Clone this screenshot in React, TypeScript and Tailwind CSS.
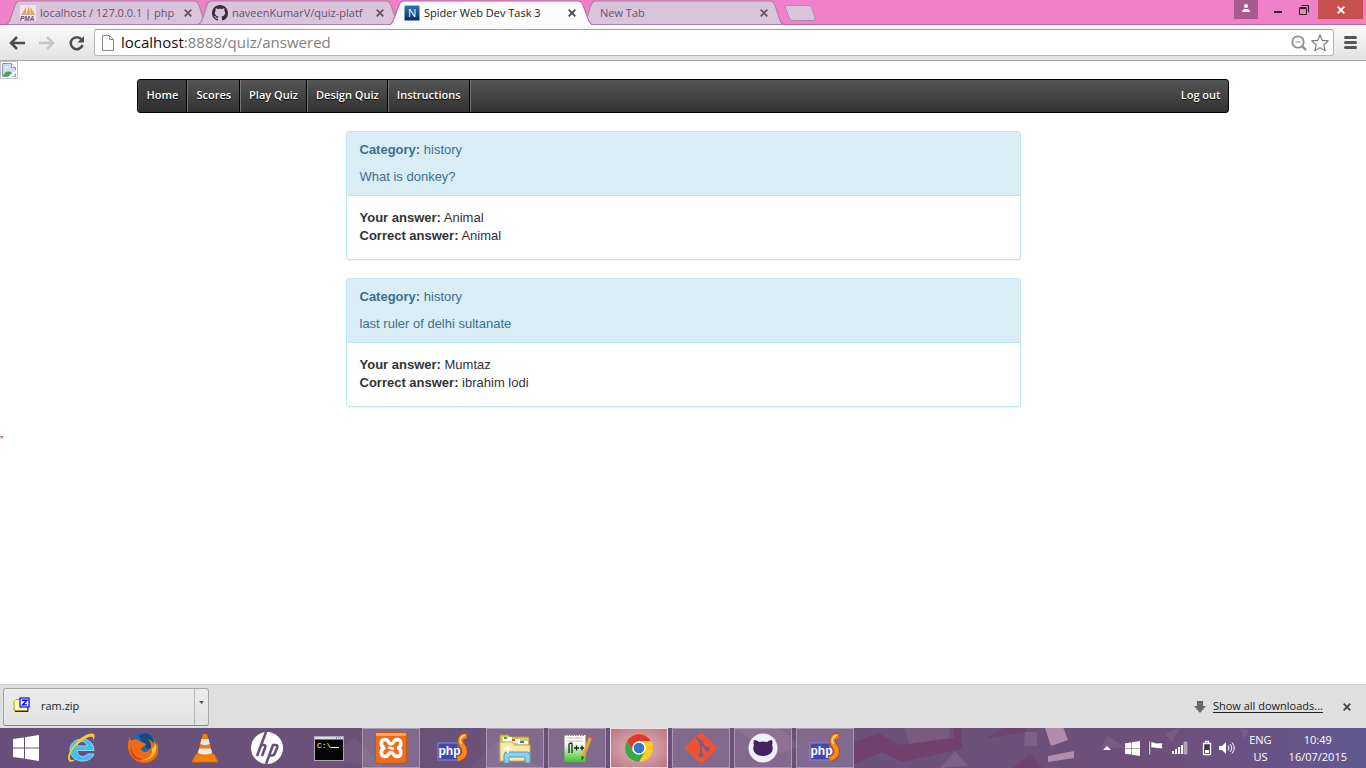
import React from "react";

const uiFont = "font-['Open_Sans','Noto_Sans',sans-serif]";

function Cross({ className = "" }: { className?: string }) {
  return (
    <svg viewBox="0 0 8 8" className={"size-2 " + className} stroke="currentColor" strokeWidth="1.8" fill="none" aria-hidden="true">
      <path d="M0.7 0.7 7.3 7.3M7.3 0.7 0.7 7.3" />
    </svg>
  );
}

function Tab({ title, icon, active = false }: { title: string; icon?: React.ReactNode; active?: boolean }) {
  return (
    <div className={"relative -mr-[14px] flex h-[25px] w-[206px] shrink-0 items-center pt-px pl-4 " + (active ? "z-10 text-[#222]" : "text-[#6b4f66]")}>
      <svg className="absolute inset-0 h-full w-full" viewBox="0 0 204 25" preserveAspectRatio="none" aria-hidden="true">
        <path
          d={active ? "M0 25.5C3 25 4 23 5 21L11 5C12 2 13 1 16 1H188C191 1 192 2 193 5L199 21C200 23 201 25 204 25.5" : "M2 24.5C4 24 5 22 6 20L11 5C12 2 13 1 16 1H188C191 1 192 2 193 5L198 20C199 23 200 24 202 24.5Z"}
          fill={active ? "#fbfbfb" : "#d9c5db"}
          stroke={active ? "#b56a9e" : "#a183a1"}
        />
      </svg>
      {icon && <span className="relative mr-1 size-4 shrink-0">{icon}</span>}
      <span className={"relative h-[18px] w-[136px] text-[11px] leading-[18px] whitespace-nowrap " + (icon ? "" : "mr-4 ml-1")}>{title}</span>
      <button type="button" aria-label="Close tab" className={"relative ml-1 p-1 " + (active ? "text-[#4a4a4a]" : "text-[#6b4f66]")}>
        <Cross />
      </button>
    </div>
  );
}

const pmaIcon = (
  <svg viewBox="0 0 16 16">
    <rect width="16" height="16" fill="#f3e4ee" />
    <path d="M2 9 6 2v7zM6.5 9 9 1l1 8zM10.500 9V2l4 7z" fill="#f89c36" />
    <path d="M1 9.500H15" stroke="#caa" />
    <text x="0" y="15.500" fontSize="6.500" fontWeight="700" fontStyle="italic" fontFamily="Liberation Sans, sans-serif" fill="#5b5080">PMA</text>
  </svg>
);

const githubPath =
  "M8 0C3.580 0 0 3.580 0 8c0 3.540 2.290 6.530 5.470 7.590.4.070.55-.17.55-.38 0-.19-.01-.82-.01-1.490-2.010.37-2.530-.49-2.690-.94-.09-.23-.48-.94-.82-1.130-.28-.15-.68-.52-.01-.53.63-.01 1.080.58 1.230.82.72 1.210 1.870.87 2.330.66.070-.52.28-.87.51-1.070-1.780-.2-3.640-.89-3.640-3.950 0-.87.31-1.590.82-2.150-.08-.2-.36-1.020.08-2.120 0 0 .67-.21 2.200.82.64-.18 1.320-.27 2-.27s1.360.09 2 .27c1.530-1.040 2.200-.82 2.200-.82.44 1.100.16 1.920.08 2.120.51.56.82 1.270.82 2.150 0 3.070-1.870 3.750-3.650 3.950.29.25.54.73.54 1.480 0 1.070-.01 1.930-.01 2.200 0 .21.15.46.55.38A8.010 8.010 0 0 0 16 8c0-4.420-3.580-8-8-8z";

const githubIcon = (
  <svg viewBox="0 0 16 16">
    <path d={githubPath} fill="#3d2b3d" />
  </svg>
);

const netIcon = (
  <svg viewBox="0 0 16 16">
    <defs>
      <linearGradient id="net" x2="0" y2="1">
        <stop stopColor="#2f79b4" />
        <stop offset="1" stopColor="#0b2c62" />
      </linearGradient>
    </defs>
    <rect x="0.5" y="0.5" width="15" height="15" fill="url(#net)" />
    <text x="4" y="12" fontSize="11" fontFamily="Open Sans, sans-serif" fill="#fff">N</text>
  </svg>
);

function TabStrip() {
  return (
    <header className="flex h-[25px] items-start bg-[#f080c8] pl-1 shadow-[inset_0_-1px_0_#b56a9e]">
      <Tab title="localhost / 127.0.0.1 | php" icon={pmaIcon} />
      <Tab title="naveenKumarV/quiz-platf" icon={githubIcon} />
      <Tab title="Spider Web Dev Task 3" icon={netIcon} active />
      <Tab title="New Tab" />
      <button type="button" aria-label="New tab" className="mt-[5px] ml-3">
        <svg viewBox="0 0 32 16" className="h-4 w-8">
          <path d="M3 0.5H24c2 0 3 1 4 3l3 9c.5 2 0 3-2 3H9c-2 0-3-1-4-3L1.500 3C1 1 1.500.5 3 .5z" fill="#d9c5db" stroke="#b184ae" />
        </svg>
      </button>
      <div className="ml-auto flex h-[19px] items-stretch">
        <button type="button" aria-label="Profile" className="mr-2 flex w-6 items-center justify-center bg-[#a9598f]">
          <svg viewBox="0 0 8 8" className="mb-1 size-2" fill="#fff">
            <circle cx="4" cy="2" r="2" />
            <path d="M0 8C0 5.500 2 5 4 5s4 .5 4 3z" />
          </svg>
        </button>
        <button type="button" aria-label="Minimize" className="flex w-6 items-center justify-center">
          <span className="mt-1 h-[2px] w-2 bg-[#222]" />
        </button>
        <button type="button" aria-label="Restore" className="flex w-7 items-center justify-center">
          <svg viewBox="0 0 10 10" className="size-[10px]" fill="none" stroke="#222">
            <path d="M.5 3.500h7v6h-7zM.5 2.500h7M2.500 .5h7v7" />
          </svg>
        </button>
        <button type="button" aria-label="Close window" className="mr-[3px] flex w-[45px] items-center justify-center bg-[#c75050] text-white">
          <Cross />
        </button>
      </div>
    </header>
  );
}

function Toolbar() {
  return (
    <div className="flex h-9 items-center border-b border-[#a8a8a8] bg-linear-to-b from-[#fbfbfb] to-[#e2e2e2] pr-2 pl-2">
      <button type="button" aria-label="Back" className="mr-3 p-px">
        <svg viewBox="0 0 16 14" className="h-[14px] w-4" fill="none" stroke="#4d4d4d" strokeWidth="2.500">
          <path d="M2 7h14M8 1 2 7l6 6" />
        </svg>
      </button>
      <button type="button" aria-label="Forward" className="mr-3 p-px">
        <svg viewBox="0 0 16 14" className="h-[14px] w-4" fill="none" stroke="#c6c6c6" strokeWidth="2.500">
          <path d="M0 7h14M8 1l6 6-6 6" />
        </svg>
      </button>
      <button type="button" aria-label="Reload" className="mr-2 p-px">
        <svg viewBox="0 0 16 16" className="size-4">
          <path d="M12.500 4.500A6 6 0 1 0 13.500 10" fill="none" stroke="#4d4d4d" strokeWidth="2.500" />
          <path d="M15 1v6.500H8.500z" fill="#4d4d4d" />
        </svg>
      </button>
      <div className="flex h-[27px] flex-1 items-center rounded-[3px] border border-[#b5b5b5] border-t-[#9d9d9d] bg-white px-1">
        <svg viewBox="0 0 14 16" className="mx-[2px] h-4 w-[14px]" fill="#fafafa" stroke="#8b8b8b">
          <path d="M1.500.5h7l4 4v11h-11zM8.500.5v4h4" />
        </svg>
        <label className={"relative ml-1 h-[25px] flex-1 text-[15px] leading-[25px] " + uiFont}>
          <input aria-label="Address" defaultValue="localhost:8888/quiz/answered" className="h-full w-full bg-transparent text-transparent outline-none" />
          <span className="pointer-events-none absolute inset-0 text-[#808080]">
            <span className="text-[#111]">localhost</span>:8888/quiz/answered
          </span>
        </label>
        <button type="button" aria-label="Zoom" className="mr-1">
          <svg viewBox="0 0 16 16" className="size-4" fill="none" stroke="#8f8f8f">
            <circle cx="7" cy="7" r="5.700" strokeWidth="1.800" />
            <path d="M4.500 7h5" />
            <path d="M11 11l4 4" strokeWidth="2.400" />
          </svg>
        </button>
        <button type="button" aria-label="Bookmark">
          <svg viewBox="0 0 18 18" className="size-[18px]" fill="#fff" stroke="#777" strokeWidth="1.100">
            <path d="M9 .8 11.300 6.400 17.300 6.900 12.700 10.800 14.200 16.800 9 13.600 3.800 16.800 5.300 10.800.7 6.900 6.700 6.400z" strokeLinejoin="round" />
          </svg>
        </button>
      </div>
      <button type="button" aria-label="Menu" className="ml-[9px] p-px">
        <svg viewBox="0 0 13 13" className="size-[13px]" stroke="#555" strokeWidth="3" strokeLinecap="round">
          <path d="M1.500 1.500h10M1.500 6.500h10M1.500 11.500h10" />
        </svg>
      </button>
    </div>
  );
}

const links = ["Home", "Scores", "Play Quiz", "Design Quiz", "Instructions"];

function SiteNav() {
  return (
    <nav className={"mx-auto flex h-[34px] w-4/5 items-stretch overflow-hidden rounded-[3px] border border-black bg-linear-to-b from-[#555] to-[#333] text-[11px] leading-[30px] font-semibold text-white [text-shadow:0_1px_1px_#000] " + uiFont}>
      {links.map((label, i) => (
        <a key={label} href="#" className={"border-r border-r-black px-2 " + (i === 0 ? "border-l border-l-[#444] bg-linear-to-b from-[#444] to-[#303030]" : "border-l border-l-[#777]")}>
          {label}
        </a>
      ))}
      <span className="w-px bg-[#777]" />
      <a href="#" className="ml-auto px-2">Log out</a>
    </nav>
  );
}

function AnswerCard({ category, question, given, correct }: { category: string; question: string; given: string; correct: string }) {
  return (
    <article className="overflow-hidden rounded-[3px] border border-[#bce8f1] bg-white shadow-[0_1px_1px_rgba(0,0,0,0.05)]">
      <div className="border-b border-[#bce8f1] bg-[#d9edf7] px-[13px] py-[9px] text-[#3f6d8c]">
        <p className="mb-[9px]"><b>Category:</b> {category}</p>
        <p>{question}</p>
      </div>
      <div className="px-[13px] pt-[13px] pb-[14px] text-[#333]">
        <p><b>Your answer:</b> {given}</p>
        <p><b>Correct answer:</b> {correct}</p>
      </div>
    </article>
  );
}

function QuizPage() {
  return (
    <main className="flex-1 bg-white font-['Liberation_Sans',Arial,sans-serif] text-[13px] leading-[18px]">
      <svg viewBox="0 0 18 18" className="size-[18px]" role="img" aria-label="Missing image">
        <path d="M.5.5h17v17H.5z" fill="#fff" stroke="#c0c0c0" />
        <path d="M2.500 2.500h9l4 4v9h-13z" fill="#c8dcf4" stroke="#8a98a8" />
        <path d="M11.500 2.500v4h4" fill="#fff" stroke="#8a98a8" />
        <path d="M5 7q2-3 4 0z" fill="#fff" />
        <path d="M3 15q3-7 9-3l-3 3z" fill="#4ba63c" />
        <path d="M8 16l8-7v3l-4 4z" fill="#fff" />
      </svg>
      <SiteNav />
      <section className="mx-auto mt-[18px] flex w-full max-w-[675px] flex-col gap-[18px]">
        <AnswerCard category="history" question="What is donkey?" given="Animal" correct="Animal" />
        <AnswerCard category="history" question="last ruler of delhi sultanate" given="Mumtaz" correct="ibrahim lodi" />
      </section>
      <p className="mt-[18px] text-[10px] text-[#555]">„</p>
    </main>
  );
}

function DownloadBar() {
  return (
    <div className={"flex h-11 items-center border-t border-[#d0d0d0] bg-[#dfdfdf] text-[11px] text-[#222] " + uiFont}>
      <div className="ml-[3px] flex h-[38px] w-[206px] items-stretch rounded-[3px] border border-[#a5a5a5] border-b-[#888] bg-linear-to-b from-[#ececec] to-[#e2e2e2]">
        <button type="button" className="flex flex-1 items-center gap-[11px] pl-[9px] text-left">
          <svg viewBox="0 0 17 16" className="mb-1 h-4 w-[17px]">
            <path d="M1 4.500 3 2.500h5l1 2h5.500v9H1z" fill="#ffffb0" stroke="#b0a020" />
            <path d="M2 14.500h13v-9" fill="none" stroke="#222" />
            <rect x="7" y="1" width="9" height="9" fill="#fff" stroke="#00f" strokeWidth="1.200" />
            <path d="M9 3.200h5L9.500 7.900H14" fill="none" stroke="#00f" strokeWidth="1.400" />
          </svg>
          <span>ram.zip</span>
        </button>
        <button type="button" aria-label="Download options" className="flex w-[14px] justify-center border-l border-[#b5b5b5] pt-3">
          <svg viewBox="0 0 5 3" className="h-[3px] w-[5px]"><path d="M0 0h5L2.500 3z" fill="#555" /></svg>
        </button>
      </div>
      <svg viewBox="0 0 12 12" className="mr-[7px] ml-auto size-3" fill="#686868"><path d="M3 0h6v5h3l-6 7-6-7h3z" /></svg>
      <a href="#" className="underline underline-offset-2">Show all downloads...</a>
      <button type="button" aria-label="Close downloads" className="mr-[11px] ml-4 p-1 text-[#444]"><Cross /></button>
    </div>
  );
}

const xamppIcon = (
  <svg viewBox="0 0 32 32">
    <rect x=".5" y=".5" width="31" height="31" rx="3" fill="#ee6c19" stroke="#c7560e" />
    <path d="M1 1h30v3H1z" fill="#f6a66c" />
    <path d="M10 7.500C5.500 7.500 5 13.500 9 16 5 18 5.500 24.500 10 24.500c4 0 3-4 6-4s2 4 6 4c4.500 0 5-6 1.500-8.500C27 13.500 26.500 7.500 22 7.500c-4 0-3 4.500-6 4.500s-2-4.500-6-4.500z" fill="none" stroke="#fff" strokeWidth="3.600" strokeLinejoin="round" />
    <path d="M13 15.500 19 17" stroke="#fff" strokeWidth="2.500" />
  </svg>
);

const phpIcon = (
  <svg viewBox="0 0 32 32">
    <rect x="1" y="11" width="20" height="17" fill="#4048b0" stroke="#7f8be0" />
    <text x="1.500" y="23" fontSize="12" fontWeight="700" fontFamily="Liberation Sans, sans-serif" fill="#fff">php</text>
    <g fill="none" strokeLinecap="butt">
      <path d="M30 4C23 4 22 9 25 13c4 5 4 12-5 14" stroke="#b94a0c" strokeWidth="6.500" />
      <path d="M29.500 4C23 4 22 9 25 13c4 5 4 12-4.500 14" stroke="#f58a1f" strokeWidth="4.500" />
      <path d="M28 3c-5 1-6 6-3.500 9" stroke="#ffd08a" strokeWidth="1.500" />
    </g>
  </svg>
);

const apps: { name: string; state: "pinned" | "open" | "active"; icon: React.ReactNode }[] = [
  {
    name: "Internet Explorer", state: "pinned", icon: (
      <svg viewBox="0 0 32 32">
        <path d="M29 18.500H12c.5 7 8 7.500 10.500 3.500H29C25 33 5 31 5 17.500 5 4 29 3 29 18.500zM22 14c-.5-6-9.500-6-10 0z" fill="#45bdf0" stroke="#8edcfb" />
        <path d="M4 29C-1 23 14 3 26 1.500c5-.5 4 4 2 7.500 1-4-1-5-4-4C15 8 4 20 5 26c0 3 4 2 6 1-3 3-6 4-7 2z" fill="#fcc92c" />
      </svg>
    ),
  },
  {
    name: "Firefox", state: "pinned", icon: (
      <svg viewBox="0 0 32 32">
        <circle cx="16" cy="15.500" r="14" fill="#2266ad" />
        <path d="M12 3c7-4 13-1 14 5 2 6-2 9-5 9l-5-4z" fill="#164a83" />
        <path d="M3 5c0 3 1 4 3 3 3-2 6 0 8 2 3 1 5 1 5 3-2 2-5 2-5 4 2 5 7 3 10-1 0-5-1-7-3-9 5 2 7 5 7 9l2-6c5 17-6 21-14 21C4 30-3 16 3 5z" fill="#ee6a18" />
        <path d="M27 8c7 13-4 22-13 20 8-1 12-5 11-11 3-2 3-6 2-9z" fill="#ffc72e" />
        <path d="M4 13c0 9 6 14 13 14C8 30 2 23 4 13z" fill="#d23f14" />
      </svg>
    ),
  },
  {
    name: "VLC", state: "pinned", icon: (
      <svg viewBox="0 0 32 32">
        <path d="M7 22h18l4 8H3z" fill="#f58210" stroke="#d96a06" />
        <path d="M14 2h4l6 22q-8 4-16 0z" fill="#f47b0c" />
        <path d="M12.500 7h7l1.300 5q-4.800 2-9.600 0zM10.200 16.500h11.600l1.400 4.500q-7.200 3-14.400 0z" fill="#e9e9e9" />
      </svg>
    ),
  },
  {
    name: "HP", state: "pinned", icon: (
      <svg viewBox="0 0 32 32">
        <circle cx="16" cy="16" r="16" fill="#fff" />
        <path d="M15 0 6 24M9 13h4q2 0 1 3l-3 8M15 32l7-19h3q2 0 1 3l-2 5q-1 2.500-3 2.500h-2" fill="none" stroke="#665080" strokeWidth="2.600" />
      </svg>
    ),
  },
  {
    name: "Command Prompt", state: "pinned", icon: (
      <svg viewBox="0 0 32 32">
        <rect x="1.500" y="4.500" width="29" height="24" fill="#050505" stroke="#aaa" />
        <path d="M2 5h28v2.500H2z" fill="#d8dce4" />
        <path d="M23 6h6" stroke="#3c63a8" strokeDasharray="1 1" />
        <text x="4" y="16" fontSize="8" fontFamily="Liberation Mono, monospace" fill="#fff">C:\</text>
        <path d="M18 15.500h8" stroke="#fff" />
      </svg>
    ),
  },
  { name: "XAMPP", state: "open", icon: xamppIcon },
  { name: "PhpStorm launcher", state: "pinned", icon: phpIcon },
  {
    name: "File Explorer", state: "open", icon: (
      <svg viewBox="0 0 32 32">
        <path d="M1 3h8l2 2h19v23H1z" fill="#e2c76c" stroke="#b6973d" />
        <path d="M4 5h9v5H4zM11 7h10v4H11zM19 9h10v3H19z" fill="#fff" />
        <path d="M5 5h3v2H5z" fill="#28a745" /><path d="M13 7h3v2h-3z" fill="#d9442b" /><path d="M21 9h4v2h-4z" fill="#2a7fd6" />
        <path d="M1 10h12l3 3h15v16H1z" fill="#f8e9a8" stroke="#c8aa52" />
        <path d="M5 31V23q0-3 3-3h20q3 0 3 3v8h-5v-6H10v6z" fill="#8fd0ee" stroke="#4a9bc8" />
        <path d="M9 13v8M5 17h8" stroke="#fff" strokeWidth="1.500" />
      </svg>
    ),
  },
  {
    name: "Notepad++", state: "open", icon: (
      <svg viewBox="0 0 32 32">
        <defs><linearGradient id="npp" x2="0" y2="1"><stop offset=".3" stopColor="#fff" /><stop offset="1" stopColor="#35c61c" /></linearGradient></defs>
        <path d="M3 2.500h22v28H3z" fill="url(#npp)" stroke="#777" />
        <path d="M4 3h20" stroke="#888" strokeWidth="2" strokeDasharray="1.500 1" />
        <path d="M6 6h16M6 9h16" stroke="#bbb" />
        <path d="M8 21v-9q3-2 3 0v9M13 16h5M15.500 13.500v5M19 16h4M21 13.500v5" fill="none" stroke="#202020" strokeWidth="1.300" />
        <path d="M30 4 22 25" stroke="#e7a337" strokeWidth="3.500" /><path d="m30.500 3-1 3" stroke="#d34b4b" strokeWidth="3.500" /><path d="m20.500 24 3 1-3 4z" fill="#543" />
      </svg>
    ),
  },
  {
    name: "Google Chrome", state: "active", icon: (
      <svg viewBox="0 0 32 32">
        <circle cx="16" cy="16" r="14" fill="#fbcf22" />
        <path d="M3.900 9A14 14 0 0 1 28.100 9H16l-6 10.500z" fill="#df3a2d" />
        <path d="M3.900 9A14 14 0 0 0 16 30l6-10.500H10z" fill="#3aa64c" />
        <circle cx="16" cy="16" r="6.800" fill="#fff" /><circle cx="16" cy="16" r="5.300" fill="#3279c7" />
      </svg>
    ),
  },
  {
    name: "Git", state: "open", icon: (
      <svg viewBox="0 0 32 32">
        <path d="M14.500 1q1.500-1 3 0L31 14.500q1 1.500 0 3L17.500 31q-1.500 1-3 0L1 17.500q-1-1.500 0-3z" fill="#f05133" />
        <path d="m11 5 5 5v14M16 11l6 6" fill="none" stroke="#766080" strokeWidth="2.200" />
        <g fill="#766080"><circle cx="16" cy="10.500" r="2.500" /><circle cx="16" cy="23" r="2.500" /><circle cx="22" cy="17" r="2.500" /></g>
      </svg>
    ),
  },
  {
    name: "GitHub", state: "open", icon: (
      <svg viewBox="0 0 32 32">
        <circle cx="16" cy="16" r="14.500" fill="#eef0fa" />
        <path d="M7 8q3 0 5 2 4-1 8 0 2-2 5-2 1 3 0 5 2 4-1 8-3 3-8 3t-8-3q-3-4-1-8-1-2 0-5z" fill="#442362" />
      </svg>
    ),
  },
  { name: "PhpStorm", state: "open", icon: phpIcon },
];

function WindowsLogo({ className }: { className: string }) {
  return (
    <svg viewBox="0 0 26 26" className={className} fill="#fff" aria-hidden="true">
      <path d="M0 4 11 2.400V12.500H0zM12 2.200 26 0v12.500H12zM0 13.500h11v10.100L0 22zM12 13.500h14V26l-14-2.200z" />
    </svg>
  );
}

function Taskbar() {
  return (
    <footer className={"relative flex h-10 items-stretch overflow-hidden bg-[#69517f] text-[11px] text-white " + uiFont}>
      <svg className="absolute inset-0 h-full w-full" viewBox="0 0 1366 40" preserveAspectRatio="none" aria-hidden="true">
        <defs><linearGradient id="bar"><stop stopColor="#67507c" /><stop offset=".3" stopColor="#6b5278" /><stop offset=".62" stopColor="#6c517b" /><stop offset=".85" stopColor="#6f4f7a" /><stop offset="1" stopColor="#605891" /></linearGradient></defs>
        <path d="M0 0h1366v40H0z" fill="url(#bar)" />
        <path d="M854 14 878 5l22 12 54-7V0h8v21l-61 13-18-10-29 12z" fill="#713b66" opacity=".7" />
        <path d="M905 0h44v10l-40 6zM735 0h45l20 18-25 10z" fill="#8a6287" opacity=".5" />
        <path d="M984 11 1003 0h24v4zM1012 40l18-14 12 14z" fill="#713b66" opacity=".6" />
        <path d="m1045 0 18-1 5 13-17 6zM1048 28l26-5v7l-26 4z" fill="#b28baf" />
        <path d="M1025 4h12v14h-13zM940 40l15-17 13 15z" fill="#8a6c91" opacity=".6" />
        <path d="m1165 5 15-5-8 14zM1240 0l10 2-6 9zM1100 20l8-12 18 12z" fill="#8a6b91" opacity=".4" />
        <path d="m470 40 30-30 40 30zM320 30l35-20 30 30z" fill="#8a7895" opacity=".2" />
      </svg>
      <button type="button" aria-label="Start" className="relative flex w-[52px] items-center justify-center">
        <WindowsLogo className="size-[26px]" />
      </button>
      <div className="relative flex gap-1">
        {apps.map((app) => (
          <button
            key={app.name}
            type="button"
            aria-label={app.name}
            className={
              "flex w-[58px] items-center justify-center border " +
              (app.state === "active"
                ? "border-[#eee0e8] bg-radial from-[#e4b9bd] to-[#b87683]"
                : app.state === "open"
                ? "border-[#a79bb4] bg-white/15"
                : "border-transparent")
            }
          >
            <span className="size-8 shrink-0">{app.icon}</span>
          </button>
        ))}
      </div>
      <div className="relative mr-[19px] ml-auto flex items-center">
        <svg viewBox="0 0 8 4" className="mr-[14px] h-1 w-2"><path d="m0 4 4-4 4 4z" fill="#fff" /></svg>
        <WindowsLogo className="mr-2 size-[15px]" />
        <svg viewBox="0 0 16 16" className="mr-2 size-4" fill="#fff" stroke="#3e314a" strokeWidth=".5"><path d="M1 1h1.500v14H1zM3 2c3-1 4 2 7 1h5l-1 3 1 2c-4 2-8-1-12 0z" /></svg>
        <svg viewBox="0 0 16 14" className="mr-[14px] h-[14px] w-4" fill="#fff"><path d="M0 10h2v3H0zM3 8h2v5H3zM6 6h2v7H6zM9 4h2v9H9z" /><path d="M12 1h3v12h-3z" fill="#a69bb3" stroke="#ddd" strokeWidth=".5" /></svg>
        <svg viewBox="0 0 10 16" className="mr-[7px] h-4 w-[10px]"><path d="M1.500 3.500h7v11h-7zM3.500 1.500h3v2h-3z" fill="#42334c" stroke="#fff" strokeWidth="1.300" /><path d="M3 10h4v3H3z" fill="#fff" /></svg>
        <svg viewBox="0 0 16 14" className="mr-[14px] h-[14px] w-4" fill="none" stroke="#fff"><path d="M0 5h3l4-4v12L3 9H0z" fill="#fff" stroke="none" /><path d="M9 4.500q2 2.500 0 5M11 3q3.500 4 0 8M13 1.500q4.500 5.500 0 11" /></svg>
        <div className="mr-[17px] text-center leading-[17px]">ENG<br />US</div>
        <div className="text-center leading-[17px]">10:49<br />16/07/2015</div>
      </div>
    </footer>
  );
}

export default function App() {
  return (
    <div className="flex min-h-screen flex-col overflow-x-hidden">
      <div className={uiFont}><TabStrip /></div>
      <Toolbar />
      <QuizPage />
      <DownloadBar />
      <Taskbar />
    </div>
  );
}
